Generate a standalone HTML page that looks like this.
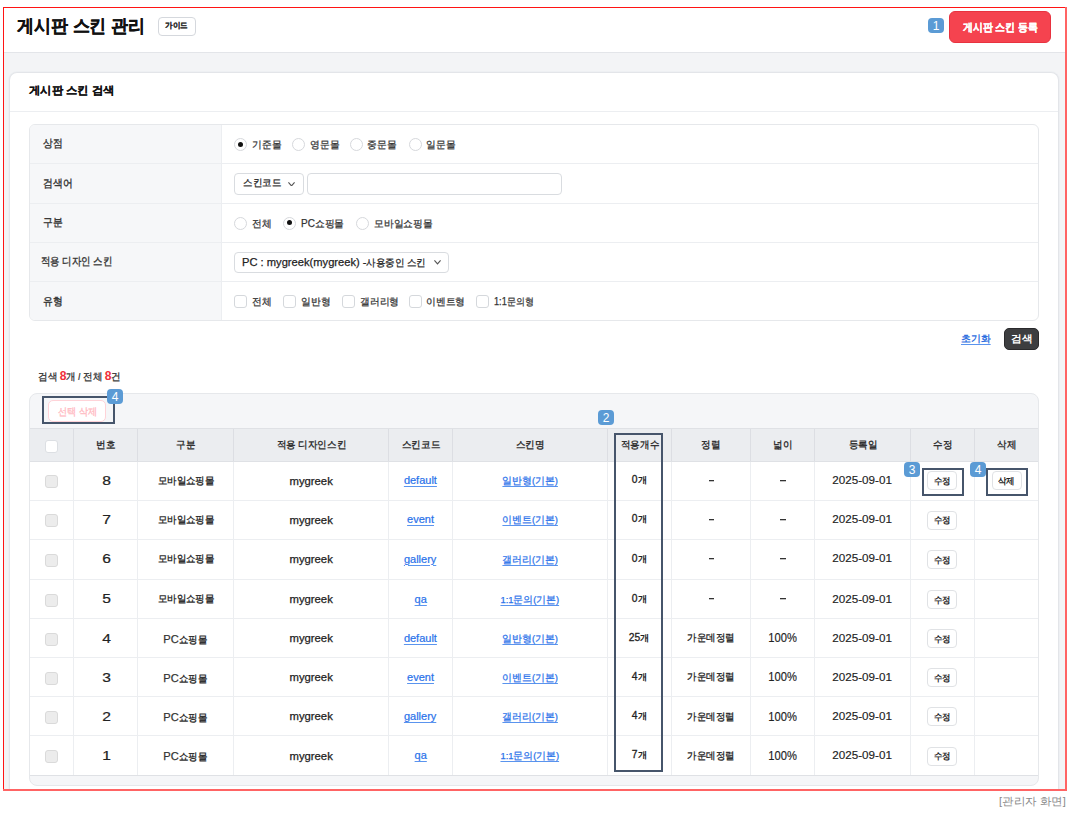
<!DOCTYPE html><html lang="ko"><head><meta charset="utf-8"><title>게시판 스킨 관리</title><style>
*{box-sizing:border-box;margin:0;padding:0}
html,body{width:1078px;height:817px;background:#fff;overflow:hidden}
body{font-family:"Liberation Sans",sans-serif;color:#222;position:relative}
.a{position:absolute;white-space:nowrap}
.badge{position:absolute;width:16px;height:15px;border-radius:4px;background:#5b9bd5;color:#fff;font-size:12px;line-height:17px;text-align:center;overflow:hidden}
.radio{position:absolute;width:13px;height:13px;border:1.5px solid #d6d8dc;border-radius:50%;background:#fff}
.radio.on::after{content:"";position:absolute;left:2.5px;top:2.5px;width:5px;height:5px;border-radius:50%;background:#111}
.cb{position:absolute;width:13px;height:13px;border:1.4px solid #d5d8dc;border-radius:3px;background:#fff}
.cbg{position:absolute;width:13px;height:13px;border:1.2px solid #dadada;border-radius:3px;background:#ececec}
.sel{position:absolute;height:22px;border:1.2px solid #d9dce0;border-radius:4px;background:#fff}
.hl{position:absolute;border:2px solid #46556b}
.box{position:absolute}
.u{text-decoration:underline;text-underline-offset:1.5px;text-decoration-thickness:1px;text-decoration-color:#5a94ee}
</style></head><body>
<div class="box" style="left:4px;top:8px;width:1061px;height:782px;background:#f3f4f6"></div>
<div class="box" style="left:4px;top:8px;width:1061px;height:44px;background:#fff"></div>
<div class="box" style="left:4px;top:52px;width:1061px;height:1px;background:#e3e5e9"></div>
<div class="a" style="left:17.10px;top:16.00px;font-size:17.5px;line-height:20px;font-weight:bold;color:#111;-webkit-text-stroke:0.3px #111;transform:scaleX(0.943);transform-origin:0 0;">게시판 스킨 관리</div>
<div class="box" style="left:158px;top:16.5px;width:38px;height:19px;border:1.5px solid #d5d8dd;border-radius:4px;background:#fff"></div>
<div class="a" style="left:164.90px;top:15.90px;font-size:8.0px;line-height:20px;font-weight:bold;color:#333;-webkit-text-stroke:0.2px #333;transform:scaleX(0.942);transform-origin:0 0;">가이드</div>
<div class="badge" style="left:928px;top:18px">1</div>
<div class="box" style="left:949px;top:11px;width:102px;height:32px;border-radius:6px;background:#f5434f;border:1px solid #e8323f"></div>
<div class="a" style="left:963.30px;top:16.70px;font-size:10.5px;line-height:20px;font-weight:bold;color:#fff;-webkit-text-stroke:0.25px #fff;transform:scaleX(0.899);transform-origin:0 0;">게시판 스킨 등록</div>
<div class="box" style="left:9px;top:72px;width:1050px;height:718px;background:#fff;border:1px solid #e3e5e9;border-bottom:none;border-radius:8px 8px 0 0;box-shadow:0 0 0 1px #eef0f3"></div>
<div class="a" style="left:29.00px;top:79.60px;font-size:11.25px;line-height:20px;font-weight:bold;color:#111;-webkit-text-stroke:0.15px #111;transform:scaleX(1.027);transform-origin:0 0;">게시판 스킨 검색</div>
<div class="box" style="left:10px;top:111px;width:1048px;height:1px;background:#eceef1"></div>
<div class="box" style="left:29px;top:124px;width:1010px;height:197px;border:1px solid #e6e8eb;border-radius:6px;background:#fff;overflow:hidden"><div class="box" style="left:0;top:0;width:191px;height:196px;background:#f6f7f9"></div><div class="box" style="left:191px;top:0;width:1px;height:196px;background:#eceef1"></div><div class="box" style="left:0;top:38px;width:1008px;height:1px;background:#eceef1"></div><div class="box" style="left:0;top:78px;width:1008px;height:1px;background:#eceef1"></div><div class="box" style="left:0;top:117px;width:1008px;height:1px;background:#eceef1"></div><div class="box" style="left:0;top:156px;width:1008px;height:1px;background:#eceef1"></div></div>
<div class="a" style="left:42.50px;top:133.30px;font-size:10.75px;line-height:20px;font-weight:normal;color:#333;-webkit-text-stroke:0.35px #333;transform:scaleX(0.891);transform-origin:0 0;">상점</div>
<div class="a" style="left:42.50px;top:172.60px;font-size:10.75px;line-height:20px;font-weight:normal;color:#333;-webkit-text-stroke:0.35px #333;transform:scaleX(0.891);transform-origin:0 0;">검색어</div>
<div class="a" style="left:42.50px;top:211.90px;font-size:10.75px;line-height:20px;font-weight:normal;color:#333;-webkit-text-stroke:0.35px #333;transform:scaleX(0.891);transform-origin:0 0;">구분</div>
<div class="a" style="left:42.50px;top:290.80px;font-size:10.75px;line-height:20px;font-weight:normal;color:#333;-webkit-text-stroke:0.35px #333;transform:scaleX(0.891);transform-origin:0 0;">유형</div>
<div class="a" style="left:41.40px;top:251.40px;font-size:11.0px;line-height:20px;font-weight:normal;color:#333;-webkit-text-stroke:0.35px #333;transform:scaleX(0.856);transform-origin:0 0;">적용 디자인 스킨</div>
<div class="radio on" style="left:234px;top:138px"></div>
<div class="a" style="left:251.80px;top:134.90px;font-size:10.25px;line-height:20px;font-weight:normal;color:#333;-webkit-text-stroke:0.25px #333;transform:scaleX(0.976);transform-origin:0 0;">기준몰</div>
<div class="radio" style="left:292px;top:138px"></div>
<div class="a" style="left:309.50px;top:134.90px;font-size:10.25px;line-height:20px;font-weight:normal;color:#333;-webkit-text-stroke:0.25px #333;transform:scaleX(0.976);transform-origin:0 0;">영문몰</div>
<div class="radio" style="left:350px;top:138px"></div>
<div class="a" style="left:367.00px;top:134.90px;font-size:10.25px;line-height:20px;font-weight:normal;color:#333;-webkit-text-stroke:0.25px #333;transform:scaleX(0.976);transform-origin:0 0;">중문몰</div>
<div class="radio" style="left:408.5px;top:138px"></div>
<div class="a" style="left:425.50px;top:134.90px;font-size:10.25px;line-height:20px;font-weight:normal;color:#333;-webkit-text-stroke:0.25px #333;transform:scaleX(0.976);transform-origin:0 0;">일문몰</div>
<div class="sel" style="left:234px;top:172.5px;width:69.5px"></div>
<div class="a" style="left:242.80px;top:172.80px;font-size:9.5px;line-height:20px;font-weight:normal;color:#222;-webkit-text-stroke:0.25px #222;transform:scaleX(0.952);transform-origin:0 0;">스킨코드</div>
<svg class="a" style="left:287.5px;top:181.5px" width="7" height="4.5" viewBox="0 0 7 4.5"><path d="M0.4 0.4 L3.5 3.8 L6.6 0.4" fill="none" stroke="#555" stroke-width="1.2"/></svg>
<div class="sel" style="left:307px;top:172.5px;width:255px"></div>
<div class="radio" style="left:234px;top:216.5px"></div>
<div class="a" style="left:251.80px;top:213.50px;font-size:10.25px;line-height:20px;font-weight:normal;color:#333;-webkit-text-stroke:0.25px #333;transform:scaleX(0.976);transform-origin:0 0;">전체</div>
<div class="radio on" style="left:283px;top:216.5px"></div>
<div class="a" style="left:300.50px;top:213.50px;font-size:10.25px;line-height:20px;font-weight:normal;color:#333;-webkit-text-stroke:0.25px #333;transform:scaleX(0.976);transform-origin:0 0;">PC쇼핑몰</div>
<div class="radio" style="left:356px;top:216.5px"></div>
<div class="a" style="left:373.50px;top:213.50px;font-size:10.25px;line-height:20px;font-weight:normal;color:#333;-webkit-text-stroke:0.25px #333;transform:scaleX(0.976);transform-origin:0 0;">모바일쇼핑몰</div>
<div class="sel" style="left:234px;top:251.5px;width:215px;height:21px"></div>
<div class="a" style="left:242.30px;top:251.90px;font-size:11.5px;line-height:20px;font-weight:normal;color:#222;-webkit-text-stroke:0.25px #222;transform:scaleX(0.97);transform-origin:0 0;">PC : mygreek(mygreek) -</div>
<div class="a" style="left:366.00px;top:252.60px;font-size:10.25px;line-height:20px;font-weight:normal;color:#222;-webkit-text-stroke:0.25px #222;transform:scaleX(0.954);transform-origin:0 0;">사용중인 스킨</div>
<svg class="a" style="left:434px;top:260px" width="7" height="4.5" viewBox="0 0 7 4.5"><path d="M0.4 0.4 L3.5 3.8 L6.6 0.4" fill="none" stroke="#555" stroke-width="1.2"/></svg>
<div class="cb" style="left:234px;top:295px"></div>
<div class="a" style="left:251.50px;top:292.40px;font-size:10.25px;line-height:20px;font-weight:normal;color:#333;-webkit-text-stroke:0.25px #333;transform:scaleX(0.976);transform-origin:0 0;">전체</div>
<div class="cb" style="left:283px;top:295px"></div>
<div class="a" style="left:300.50px;top:292.40px;font-size:10.25px;line-height:20px;font-weight:normal;color:#333;-webkit-text-stroke:0.25px #333;transform:scaleX(0.976);transform-origin:0 0;">일반형</div>
<div class="cb" style="left:342px;top:295px"></div>
<div class="a" style="left:359.50px;top:292.40px;font-size:10.25px;line-height:20px;font-weight:normal;color:#333;-webkit-text-stroke:0.25px #333;transform:scaleX(0.976);transform-origin:0 0;">갤러리형</div>
<div class="cb" style="left:408.5px;top:295px"></div>
<div class="a" style="left:426.00px;top:292.40px;font-size:10.25px;line-height:20px;font-weight:normal;color:#333;-webkit-text-stroke:0.25px #333;transform:scaleX(0.976);transform-origin:0 0;">이벤트형</div>
<div class="cb" style="left:476px;top:295px"></div>
<div class="a" style="left:493.50px;top:292.40px;font-size:10.25px;line-height:20px;font-weight:normal;color:#333;-webkit-text-stroke:0.25px #333;transform:scaleX(0.898);transform-origin:0 0;">1:1문의형</div>
<div class="a" style="left:961.30px;top:329.00px;font-size:9.75px;line-height:20px;font-weight:bold;color:#2f6fe0;transform:scaleX(0.988);transform-origin:0 0;"><span class="u">초기화</span></div>
<div class="box" style="left:1003.5px;top:328px;width:35.5px;height:22px;border-radius:5px;background:#3d3e40;border:1px solid #2a2a2c"></div>
<div class="a" style="left:1010.70px;top:328.60px;font-size:10.0px;line-height:20px;font-weight:bold;color:#fff;transform:scaleX(1.065);transform-origin:0 0;">검색</div>
<div class="a" style="left:37.80px;top:366.10px;font-size:9.75px;line-height:20px;font-weight:bold;color:#444;transform:scaleX(0.953);transform-origin:0 0;">검색 <span style="font-size:1.3em;letter-spacing:-0.5px;color:#f0303c">8</span>개 / 전체 <span style="font-size:1.3em;letter-spacing:-0.5px;color:#f0303c">8</span>건</div>
<div class="box" style="left:29px;top:393px;width:1010px;height:393px;border:1px solid #e6e8eb;border-radius:8px;background:#f5f6f8"></div>
<div class="box" style="left:48px;top:400px;width:58px;height:21.5px;border:1.2px solid #ffd3d8;border-radius:5px;background:#fff"></div>
<div class="a" style="left:58.10px;top:401.80px;font-size:10.0px;line-height:20px;font-weight:normal;color:#ffbcc4;-webkit-text-stroke:0.35px #ffbcc4;transform:scaleX(0.917);transform-origin:0 0;">선택 삭제</div>
<div class="hl" style="left:42px;top:396px;width:73px;height:28px"></div>
<div class="badge" style="left:107px;top:389px">4</div>
<div class="box" style="left:30px;top:428px;width:1008px;height:34px;background:#ebedf0;border-top:1px solid #dfe1e5;border-bottom:1px solid #dfe1e5"></div>
<div class="box" style="left:30px;top:462px;width:1008px;height:313px;background:#fff"></div>
<div class="box" style="left:30px;top:500.0px;width:1008px;height:1px;background:#eceef1"></div>
<div class="box" style="left:30px;top:539.0px;width:1008px;height:1px;background:#eceef1"></div>
<div class="box" style="left:30px;top:579.0px;width:1008px;height:1px;background:#eceef1"></div>
<div class="box" style="left:30px;top:618.0px;width:1008px;height:1px;background:#eceef1"></div>
<div class="box" style="left:30px;top:657.0px;width:1008px;height:1px;background:#eceef1"></div>
<div class="box" style="left:30px;top:696.0px;width:1008px;height:1px;background:#eceef1"></div>
<div class="box" style="left:30px;top:735.0px;width:1008px;height:1px;background:#eceef1"></div>
<div class="box" style="left:30px;top:775px;width:1008px;height:1px;background:#dfe1e5"></div>
<div class="box" style="left:73px;top:429px;width:1px;height:32px;background:#dcdee3"></div>
<div class="box" style="left:73px;top:462px;width:1px;height:313px;background:#eceef1"></div>
<div class="box" style="left:137px;top:429px;width:1px;height:32px;background:#dcdee3"></div>
<div class="box" style="left:137px;top:462px;width:1px;height:313px;background:#eceef1"></div>
<div class="box" style="left:233px;top:429px;width:1px;height:32px;background:#dcdee3"></div>
<div class="box" style="left:233px;top:462px;width:1px;height:313px;background:#eceef1"></div>
<div class="box" style="left:388px;top:429px;width:1px;height:32px;background:#dcdee3"></div>
<div class="box" style="left:388px;top:462px;width:1px;height:313px;background:#eceef1"></div>
<div class="box" style="left:452px;top:429px;width:1px;height:32px;background:#dcdee3"></div>
<div class="box" style="left:452px;top:462px;width:1px;height:313px;background:#eceef1"></div>
<div class="box" style="left:607px;top:429px;width:1px;height:32px;background:#dcdee3"></div>
<div class="box" style="left:607px;top:462px;width:1px;height:313px;background:#eceef1"></div>
<div class="box" style="left:671px;top:429px;width:1px;height:32px;background:#dcdee3"></div>
<div class="box" style="left:671px;top:462px;width:1px;height:313px;background:#eceef1"></div>
<div class="box" style="left:750px;top:429px;width:1px;height:32px;background:#dcdee3"></div>
<div class="box" style="left:750px;top:462px;width:1px;height:313px;background:#eceef1"></div>
<div class="box" style="left:814px;top:429px;width:1px;height:32px;background:#dcdee3"></div>
<div class="box" style="left:814px;top:462px;width:1px;height:313px;background:#eceef1"></div>
<div class="box" style="left:910px;top:429px;width:1px;height:32px;background:#dcdee3"></div>
<div class="box" style="left:910px;top:462px;width:1px;height:313px;background:#eceef1"></div>
<div class="box" style="left:974px;top:429px;width:1px;height:32px;background:#dcdee3"></div>
<div class="box" style="left:974px;top:462px;width:1px;height:313px;background:#eceef1"></div>
<div class="cb" style="left:45px;top:440px;border-color:#dcdfe3"></div>
<div class="a" style="left:74px;top:435.30px;width:63px;text-align:center;font-size:10.0px;line-height:20px;font-weight:bold;color:#333;"><span style="display:inline-block;transform:scaleX(0.954);">번호</span></div>
<div class="a" style="left:138px;top:435.30px;width:95px;text-align:center;font-size:10.0px;line-height:20px;font-weight:bold;color:#333;"><span style="display:inline-block;transform:scaleX(0.954);">구분</span></div>
<div class="a" style="left:234px;top:435.30px;width:154px;text-align:center;font-size:10.0px;line-height:20px;font-weight:bold;color:#333;"><span style="display:inline-block;transform:scaleX(0.954);">적용 디자인스킨</span></div>
<div class="a" style="left:389px;top:435.30px;width:63px;text-align:center;font-size:10.0px;line-height:20px;font-weight:bold;color:#333;"><span style="display:inline-block;transform:scaleX(0.954);">스킨코드</span></div>
<div class="a" style="left:453px;top:435.30px;width:154px;text-align:center;font-size:10.0px;line-height:20px;font-weight:bold;color:#333;"><span style="display:inline-block;transform:scaleX(0.954);">스킨명</span></div>
<div class="a" style="left:608px;top:435.30px;width:63px;text-align:center;font-size:10.0px;line-height:20px;font-weight:bold;color:#333;"><span style="display:inline-block;transform:scaleX(0.954);">적용개수</span></div>
<div class="a" style="left:672px;top:435.30px;width:78px;text-align:center;font-size:10.0px;line-height:20px;font-weight:bold;color:#333;"><span style="display:inline-block;transform:scaleX(0.954);">정렬</span></div>
<div class="a" style="left:751px;top:435.30px;width:63px;text-align:center;font-size:10.0px;line-height:20px;font-weight:bold;color:#333;"><span style="display:inline-block;transform:scaleX(0.954);">넓이</span></div>
<div class="a" style="left:815px;top:435.30px;width:95px;text-align:center;font-size:10.0px;line-height:20px;font-weight:bold;color:#333;"><span style="display:inline-block;transform:scaleX(0.954);">등록일</span></div>
<div class="a" style="left:911px;top:435.30px;width:63px;text-align:center;font-size:10.0px;line-height:20px;font-weight:bold;color:#333;"><span style="display:inline-block;transform:scaleX(0.954);">수정</span></div>
<div class="a" style="left:975px;top:435.30px;width:63px;text-align:center;font-size:10.0px;line-height:20px;font-weight:bold;color:#333;"><span style="display:inline-block;transform:scaleX(0.954);">삭제</span></div>
<div class="cbg" style="left:45px;top:475.3px"></div>
<div class="a" style="left:75px;top:470.90px;width:63px;text-align:center;font-size:12.5px;line-height:20px;font-weight:normal;color:#222;-webkit-text-stroke:0.2px #222;"><span style="display:inline-block;transform:scaleX(1.247);">8</span></div>
<div class="a" style="left:138px;top:470.90px;width:95px;text-align:center;font-size:10.25px;line-height:20px;font-weight:bold;color:#333;"><span style="display:inline-block;transform:scaleX(0.944);">모바일쇼핑몰</span></div>
<div class="a" style="left:234px;top:470.50px;width:154px;text-align:center;font-size:10.5px;line-height:20px;font-weight:normal;color:#222;-webkit-text-stroke:0.25px #222;"><span style="display:inline-block;transform:scaleX(1.075);">mygreek</span></div>
<div class="a" style="left:389px;top:471.30px;width:63px;text-align:center;font-size:10.25px;line-height:20px;font-weight:normal;color:#2a72ea;-webkit-text-stroke:0.2px #2a72ea;"><span style="display:inline-block;transform:scaleX(1.072);"><span class="u">default</span></span></div>
<div class="a" style="left:453px;top:471.30px;width:154px;text-align:center;font-size:9.5px;line-height:20px;font-weight:normal;color:#2a72ea;-webkit-text-stroke:0.25px #2a72ea;"><span style="display:inline-block;transform:scaleX(0.985);"><span class="u">일반형(기본)</span></span></div>
<div class="a" style="left:608px;top:470.30px;width:63px;text-align:center;font-size:9.0px;line-height:20px;font-weight:bold;color:#222;"><span style="display:inline-block;transform:scaleX(1.02);"><span style="font-weight:normal;font-size:1.12em;-webkit-text-stroke:0.3px currentColor">0</span>개</span></div>
<div class="box" style="left:708.8px;top:480px;width:5.4px;height:1px;background:#333;box-shadow:0 0.6px 0 #9a9a9a"></div>
<div class="box" style="left:780.3px;top:480px;width:5.4px;height:1px;background:#333;box-shadow:0 0.6px 0 #9a9a9a"></div>
<div class="a" style="left:815px;top:470.10px;width:95px;text-align:center;font-size:11.75px;line-height:20px;font-weight:normal;color:#222;-webkit-text-stroke:0.15px #222;"><span style="display:inline-block;transform:scaleX(0.993);">2025-09-01</span></div>
<div class="box" style="left:927px;top:471.4px;width:29.7px;height:19px;border:1px solid #e0e2e5;border-radius:4px;background:#fff"></div>
<div class="a" style="left:934.10px;top:471.20px;font-size:8.75px;line-height:20px;font-weight:bold;color:#222;transform:scaleX(0.94);transform-origin:0 0;">수정</div>
<div class="box" style="left:992px;top:471.4px;width:29.5px;height:19px;border:1px solid #e0e2e5;border-radius:4px;background:#fff"></div>
<div class="a" style="left:998.10px;top:471.20px;font-size:8.75px;line-height:20px;font-weight:bold;color:#222;transform:scaleX(0.94);transform-origin:0 0;">삭제</div>
<div class="cbg" style="left:45px;top:514.4px"></div>
<div class="a" style="left:75px;top:510.05px;width:63px;text-align:center;font-size:12.5px;line-height:20px;font-weight:normal;color:#222;-webkit-text-stroke:0.2px #222;"><span style="display:inline-block;transform:scaleX(1.247);">7</span></div>
<div class="a" style="left:138px;top:510.05px;width:95px;text-align:center;font-size:10.25px;line-height:20px;font-weight:bold;color:#333;"><span style="display:inline-block;transform:scaleX(0.944);">모바일쇼핑몰</span></div>
<div class="a" style="left:234px;top:509.65px;width:154px;text-align:center;font-size:10.5px;line-height:20px;font-weight:normal;color:#222;-webkit-text-stroke:0.25px #222;"><span style="display:inline-block;transform:scaleX(1.075);">mygreek</span></div>
<div class="a" style="left:389px;top:510.45px;width:63px;text-align:center;font-size:10.25px;line-height:20px;font-weight:normal;color:#2a72ea;-webkit-text-stroke:0.2px #2a72ea;"><span style="display:inline-block;transform:scaleX(1.072);"><span class="u">event</span></span></div>
<div class="a" style="left:453px;top:510.45px;width:154px;text-align:center;font-size:9.5px;line-height:20px;font-weight:normal;color:#2a72ea;-webkit-text-stroke:0.25px #2a72ea;"><span style="display:inline-block;transform:scaleX(0.985);"><span class="u">이벤트(기본)</span></span></div>
<div class="a" style="left:608px;top:509.45px;width:63px;text-align:center;font-size:9.0px;line-height:20px;font-weight:bold;color:#222;"><span style="display:inline-block;transform:scaleX(1.02);"><span style="font-weight:normal;font-size:1.12em;-webkit-text-stroke:0.3px currentColor">0</span>개</span></div>
<div class="box" style="left:708.8px;top:519px;width:5.4px;height:1px;background:#333;box-shadow:0 0.6px 0 #9a9a9a"></div>
<div class="box" style="left:780.3px;top:519px;width:5.4px;height:1px;background:#333;box-shadow:0 0.6px 0 #9a9a9a"></div>
<div class="a" style="left:815px;top:509.25px;width:95px;text-align:center;font-size:11.75px;line-height:20px;font-weight:normal;color:#222;-webkit-text-stroke:0.15px #222;"><span style="display:inline-block;transform:scaleX(0.993);">2025-09-01</span></div>
<div class="box" style="left:927px;top:510.5px;width:29.7px;height:19px;border:1px solid #e0e2e5;border-radius:4px;background:#fff"></div>
<div class="a" style="left:934.10px;top:510.35px;font-size:8.75px;line-height:20px;font-weight:bold;color:#222;transform:scaleX(0.94);transform-origin:0 0;">수정</div>
<div class="cbg" style="left:45px;top:553.6px"></div>
<div class="a" style="left:75px;top:549.20px;width:63px;text-align:center;font-size:12.5px;line-height:20px;font-weight:normal;color:#222;-webkit-text-stroke:0.2px #222;"><span style="display:inline-block;transform:scaleX(1.247);">6</span></div>
<div class="a" style="left:138px;top:549.20px;width:95px;text-align:center;font-size:10.25px;line-height:20px;font-weight:bold;color:#333;"><span style="display:inline-block;transform:scaleX(0.944);">모바일쇼핑몰</span></div>
<div class="a" style="left:234px;top:548.80px;width:154px;text-align:center;font-size:10.5px;line-height:20px;font-weight:normal;color:#222;-webkit-text-stroke:0.25px #222;"><span style="display:inline-block;transform:scaleX(1.075);">mygreek</span></div>
<div class="a" style="left:389px;top:549.60px;width:63px;text-align:center;font-size:10.25px;line-height:20px;font-weight:normal;color:#2a72ea;-webkit-text-stroke:0.2px #2a72ea;"><span style="display:inline-block;transform:scaleX(1.072);"><span class="u">gallery</span></span></div>
<div class="a" style="left:453px;top:549.60px;width:154px;text-align:center;font-size:9.5px;line-height:20px;font-weight:normal;color:#2a72ea;-webkit-text-stroke:0.25px #2a72ea;"><span style="display:inline-block;transform:scaleX(0.985);"><span class="u">갤러리(기본)</span></span></div>
<div class="a" style="left:608px;top:548.60px;width:63px;text-align:center;font-size:9.0px;line-height:20px;font-weight:bold;color:#222;"><span style="display:inline-block;transform:scaleX(1.02);"><span style="font-weight:normal;font-size:1.12em;-webkit-text-stroke:0.3px currentColor">0</span>개</span></div>
<div class="box" style="left:708.8px;top:558px;width:5.4px;height:1px;background:#333;box-shadow:0 0.6px 0 #9a9a9a"></div>
<div class="box" style="left:780.3px;top:558px;width:5.4px;height:1px;background:#333;box-shadow:0 0.6px 0 #9a9a9a"></div>
<div class="a" style="left:815px;top:548.40px;width:95px;text-align:center;font-size:11.75px;line-height:20px;font-weight:normal;color:#222;-webkit-text-stroke:0.15px #222;"><span style="display:inline-block;transform:scaleX(0.993);">2025-09-01</span></div>
<div class="box" style="left:927px;top:549.7px;width:29.7px;height:19px;border:1px solid #e0e2e5;border-radius:4px;background:#fff"></div>
<div class="a" style="left:934.10px;top:549.50px;font-size:8.75px;line-height:20px;font-weight:bold;color:#222;transform:scaleX(0.94);transform-origin:0 0;">수정</div>
<div class="cbg" style="left:45px;top:593.8px"></div>
<div class="a" style="left:75px;top:589.35px;width:63px;text-align:center;font-size:12.5px;line-height:20px;font-weight:normal;color:#222;-webkit-text-stroke:0.2px #222;"><span style="display:inline-block;transform:scaleX(1.247);">5</span></div>
<div class="a" style="left:138px;top:589.35px;width:95px;text-align:center;font-size:10.25px;line-height:20px;font-weight:bold;color:#333;"><span style="display:inline-block;transform:scaleX(0.944);">모바일쇼핑몰</span></div>
<div class="a" style="left:234px;top:588.95px;width:154px;text-align:center;font-size:10.5px;line-height:20px;font-weight:normal;color:#222;-webkit-text-stroke:0.25px #222;"><span style="display:inline-block;transform:scaleX(1.075);">mygreek</span></div>
<div class="a" style="left:389px;top:589.75px;width:63px;text-align:center;font-size:10.25px;line-height:20px;font-weight:normal;color:#2a72ea;-webkit-text-stroke:0.2px #2a72ea;"><span style="display:inline-block;transform:scaleX(1.072);"><span class="u">qa</span></span></div>
<div class="a" style="left:453px;top:589.75px;width:154px;text-align:center;font-size:9.5px;line-height:20px;font-weight:normal;color:#2a72ea;-webkit-text-stroke:0.25px #2a72ea;"><span style="display:inline-block;transform:scaleX(0.985);"><span class="u">1:1문의(기본)</span></span></div>
<div class="a" style="left:608px;top:588.75px;width:63px;text-align:center;font-size:9.0px;line-height:20px;font-weight:bold;color:#222;"><span style="display:inline-block;transform:scaleX(1.02);"><span style="font-weight:normal;font-size:1.12em;-webkit-text-stroke:0.3px currentColor">0</span>개</span></div>
<div class="box" style="left:708.8px;top:598px;width:5.4px;height:1px;background:#333;box-shadow:0 0.6px 0 #9a9a9a"></div>
<div class="box" style="left:780.3px;top:598px;width:5.4px;height:1px;background:#333;box-shadow:0 0.6px 0 #9a9a9a"></div>
<div class="a" style="left:815px;top:588.55px;width:95px;text-align:center;font-size:11.75px;line-height:20px;font-weight:normal;color:#222;-webkit-text-stroke:0.15px #222;"><span style="display:inline-block;transform:scaleX(0.993);">2025-09-01</span></div>
<div class="box" style="left:927px;top:589.9px;width:29.7px;height:19px;border:1px solid #e0e2e5;border-radius:4px;background:#fff"></div>
<div class="a" style="left:934.10px;top:589.65px;font-size:8.75px;line-height:20px;font-weight:bold;color:#222;transform:scaleX(0.94);transform-origin:0 0;">수정</div>
<div class="cbg" style="left:45px;top:632.9px"></div>
<div class="a" style="left:75px;top:628.50px;width:63px;text-align:center;font-size:12.5px;line-height:20px;font-weight:normal;color:#222;-webkit-text-stroke:0.2px #222;"><span style="display:inline-block;transform:scaleX(1.247);">4</span></div>
<div class="a" style="left:138px;top:628.50px;width:95px;text-align:center;font-size:10.25px;line-height:20px;font-weight:bold;color:#333;"><span style="display:inline-block;transform:scaleX(0.944);"><span style="font-weight:normal;font-size:1.15em;-webkit-text-stroke:0.25px #333">PC</span>쇼핑몰</span></div>
<div class="a" style="left:234px;top:628.10px;width:154px;text-align:center;font-size:10.5px;line-height:20px;font-weight:normal;color:#222;-webkit-text-stroke:0.25px #222;"><span style="display:inline-block;transform:scaleX(1.075);">mygreek</span></div>
<div class="a" style="left:389px;top:628.90px;width:63px;text-align:center;font-size:10.25px;line-height:20px;font-weight:normal;color:#2a72ea;-webkit-text-stroke:0.2px #2a72ea;"><span style="display:inline-block;transform:scaleX(1.072);"><span class="u">default</span></span></div>
<div class="a" style="left:453px;top:628.90px;width:154px;text-align:center;font-size:9.5px;line-height:20px;font-weight:normal;color:#2a72ea;-webkit-text-stroke:0.25px #2a72ea;"><span style="display:inline-block;transform:scaleX(0.985);"><span class="u">일반형(기본)</span></span></div>
<div class="a" style="left:608px;top:627.90px;width:63px;text-align:center;font-size:9.0px;line-height:20px;font-weight:bold;color:#222;"><span style="display:inline-block;transform:scaleX(1.02);"><span style="font-weight:normal;font-size:1.12em;-webkit-text-stroke:0.3px currentColor">25</span>개</span></div>
<div class="a" style="left:672px;top:628.20px;width:78px;text-align:center;font-size:9.75px;line-height:20px;font-weight:bold;color:#333;"><span style="display:inline-block;transform:scaleX(0.944);">가운데정렬</span></div>
<div class="a" style="left:751px;top:628.20px;width:63px;text-align:center;font-size:12.25px;line-height:20px;font-weight:normal;color:#222;-webkit-text-stroke:0.15px #222;"><span style="display:inline-block;transform:scaleX(0.913);">100%</span></div>
<div class="a" style="left:815px;top:627.70px;width:95px;text-align:center;font-size:11.75px;line-height:20px;font-weight:normal;color:#222;-webkit-text-stroke:0.15px #222;"><span style="display:inline-block;transform:scaleX(0.993);">2025-09-01</span></div>
<div class="box" style="left:927px;top:629.0px;width:29.7px;height:19px;border:1px solid #e0e2e5;border-radius:4px;background:#fff"></div>
<div class="a" style="left:934.10px;top:628.80px;font-size:8.75px;line-height:20px;font-weight:bold;color:#222;transform:scaleX(0.94);transform-origin:0 0;">수정</div>
<div class="cbg" style="left:45px;top:672.0px"></div>
<div class="a" style="left:75px;top:667.65px;width:63px;text-align:center;font-size:12.5px;line-height:20px;font-weight:normal;color:#222;-webkit-text-stroke:0.2px #222;"><span style="display:inline-block;transform:scaleX(1.247);">3</span></div>
<div class="a" style="left:138px;top:667.65px;width:95px;text-align:center;font-size:10.25px;line-height:20px;font-weight:bold;color:#333;"><span style="display:inline-block;transform:scaleX(0.944);"><span style="font-weight:normal;font-size:1.15em;-webkit-text-stroke:0.25px #333">PC</span>쇼핑몰</span></div>
<div class="a" style="left:234px;top:667.25px;width:154px;text-align:center;font-size:10.5px;line-height:20px;font-weight:normal;color:#222;-webkit-text-stroke:0.25px #222;"><span style="display:inline-block;transform:scaleX(1.075);">mygreek</span></div>
<div class="a" style="left:389px;top:668.05px;width:63px;text-align:center;font-size:10.25px;line-height:20px;font-weight:normal;color:#2a72ea;-webkit-text-stroke:0.2px #2a72ea;"><span style="display:inline-block;transform:scaleX(1.072);"><span class="u">event</span></span></div>
<div class="a" style="left:453px;top:668.05px;width:154px;text-align:center;font-size:9.5px;line-height:20px;font-weight:normal;color:#2a72ea;-webkit-text-stroke:0.25px #2a72ea;"><span style="display:inline-block;transform:scaleX(0.985);"><span class="u">이벤트(기본)</span></span></div>
<div class="a" style="left:608px;top:667.05px;width:63px;text-align:center;font-size:9.0px;line-height:20px;font-weight:bold;color:#222;"><span style="display:inline-block;transform:scaleX(1.02);"><span style="font-weight:normal;font-size:1.12em;-webkit-text-stroke:0.3px currentColor">4</span>개</span></div>
<div class="a" style="left:672px;top:667.35px;width:78px;text-align:center;font-size:9.75px;line-height:20px;font-weight:bold;color:#333;"><span style="display:inline-block;transform:scaleX(0.944);">가운데정렬</span></div>
<div class="a" style="left:751px;top:667.35px;width:63px;text-align:center;font-size:12.25px;line-height:20px;font-weight:normal;color:#222;-webkit-text-stroke:0.15px #222;"><span style="display:inline-block;transform:scaleX(0.913);">100%</span></div>
<div class="a" style="left:815px;top:666.85px;width:95px;text-align:center;font-size:11.75px;line-height:20px;font-weight:normal;color:#222;-webkit-text-stroke:0.15px #222;"><span style="display:inline-block;transform:scaleX(0.993);">2025-09-01</span></div>
<div class="box" style="left:927px;top:668.1px;width:29.7px;height:19px;border:1px solid #e0e2e5;border-radius:4px;background:#fff"></div>
<div class="a" style="left:934.10px;top:667.95px;font-size:8.75px;line-height:20px;font-weight:bold;color:#222;transform:scaleX(0.94);transform-origin:0 0;">수정</div>
<div class="cbg" style="left:45px;top:711.2px"></div>
<div class="a" style="left:75px;top:706.80px;width:63px;text-align:center;font-size:12.5px;line-height:20px;font-weight:normal;color:#222;-webkit-text-stroke:0.2px #222;"><span style="display:inline-block;transform:scaleX(1.247);">2</span></div>
<div class="a" style="left:138px;top:706.80px;width:95px;text-align:center;font-size:10.25px;line-height:20px;font-weight:bold;color:#333;"><span style="display:inline-block;transform:scaleX(0.944);"><span style="font-weight:normal;font-size:1.15em;-webkit-text-stroke:0.25px #333">PC</span>쇼핑몰</span></div>
<div class="a" style="left:234px;top:706.40px;width:154px;text-align:center;font-size:10.5px;line-height:20px;font-weight:normal;color:#222;-webkit-text-stroke:0.25px #222;"><span style="display:inline-block;transform:scaleX(1.075);">mygreek</span></div>
<div class="a" style="left:389px;top:707.20px;width:63px;text-align:center;font-size:10.25px;line-height:20px;font-weight:normal;color:#2a72ea;-webkit-text-stroke:0.2px #2a72ea;"><span style="display:inline-block;transform:scaleX(1.072);"><span class="u">gallery</span></span></div>
<div class="a" style="left:453px;top:707.20px;width:154px;text-align:center;font-size:9.5px;line-height:20px;font-weight:normal;color:#2a72ea;-webkit-text-stroke:0.25px #2a72ea;"><span style="display:inline-block;transform:scaleX(0.985);"><span class="u">갤러리(기본)</span></span></div>
<div class="a" style="left:608px;top:706.20px;width:63px;text-align:center;font-size:9.0px;line-height:20px;font-weight:bold;color:#222;"><span style="display:inline-block;transform:scaleX(1.02);"><span style="font-weight:normal;font-size:1.12em;-webkit-text-stroke:0.3px currentColor">4</span>개</span></div>
<div class="a" style="left:672px;top:706.50px;width:78px;text-align:center;font-size:9.75px;line-height:20px;font-weight:bold;color:#333;"><span style="display:inline-block;transform:scaleX(0.944);">가운데정렬</span></div>
<div class="a" style="left:751px;top:706.50px;width:63px;text-align:center;font-size:12.25px;line-height:20px;font-weight:normal;color:#222;-webkit-text-stroke:0.15px #222;"><span style="display:inline-block;transform:scaleX(0.913);">100%</span></div>
<div class="a" style="left:815px;top:706.00px;width:95px;text-align:center;font-size:11.75px;line-height:20px;font-weight:normal;color:#222;-webkit-text-stroke:0.15px #222;"><span style="display:inline-block;transform:scaleX(0.993);">2025-09-01</span></div>
<div class="box" style="left:927px;top:707.3px;width:29.7px;height:19px;border:1px solid #e0e2e5;border-radius:4px;background:#fff"></div>
<div class="a" style="left:934.10px;top:707.10px;font-size:8.75px;line-height:20px;font-weight:bold;color:#222;transform:scaleX(0.94);transform-origin:0 0;">수정</div>
<div class="cbg" style="left:45px;top:750.3px"></div>
<div class="a" style="left:75px;top:745.95px;width:63px;text-align:center;font-size:12.5px;line-height:20px;font-weight:normal;color:#222;-webkit-text-stroke:0.2px #222;"><span style="display:inline-block;transform:scaleX(1.247);">1</span></div>
<div class="a" style="left:138px;top:745.95px;width:95px;text-align:center;font-size:10.25px;line-height:20px;font-weight:bold;color:#333;"><span style="display:inline-block;transform:scaleX(0.944);"><span style="font-weight:normal;font-size:1.15em;-webkit-text-stroke:0.25px #333">PC</span>쇼핑몰</span></div>
<div class="a" style="left:234px;top:745.55px;width:154px;text-align:center;font-size:10.5px;line-height:20px;font-weight:normal;color:#222;-webkit-text-stroke:0.25px #222;"><span style="display:inline-block;transform:scaleX(1.075);">mygreek</span></div>
<div class="a" style="left:389px;top:746.35px;width:63px;text-align:center;font-size:10.25px;line-height:20px;font-weight:normal;color:#2a72ea;-webkit-text-stroke:0.2px #2a72ea;"><span style="display:inline-block;transform:scaleX(1.072);"><span class="u">qa</span></span></div>
<div class="a" style="left:453px;top:746.35px;width:154px;text-align:center;font-size:9.5px;line-height:20px;font-weight:normal;color:#2a72ea;-webkit-text-stroke:0.25px #2a72ea;"><span style="display:inline-block;transform:scaleX(0.985);"><span class="u">1:1문의(기본)</span></span></div>
<div class="a" style="left:608px;top:745.35px;width:63px;text-align:center;font-size:9.0px;line-height:20px;font-weight:bold;color:#222;"><span style="display:inline-block;transform:scaleX(1.02);"><span style="font-weight:normal;font-size:1.12em;-webkit-text-stroke:0.3px currentColor">7</span>개</span></div>
<div class="a" style="left:672px;top:745.65px;width:78px;text-align:center;font-size:9.75px;line-height:20px;font-weight:bold;color:#333;"><span style="display:inline-block;transform:scaleX(0.944);">가운데정렬</span></div>
<div class="a" style="left:751px;top:745.65px;width:63px;text-align:center;font-size:12.25px;line-height:20px;font-weight:normal;color:#222;-webkit-text-stroke:0.15px #222;"><span style="display:inline-block;transform:scaleX(0.913);">100%</span></div>
<div class="a" style="left:815px;top:745.15px;width:95px;text-align:center;font-size:11.75px;line-height:20px;font-weight:normal;color:#222;-webkit-text-stroke:0.15px #222;"><span style="display:inline-block;transform:scaleX(0.993);">2025-09-01</span></div>
<div class="box" style="left:927px;top:746.5px;width:29.7px;height:19px;border:1px solid #e0e2e5;border-radius:4px;background:#fff"></div>
<div class="a" style="left:934.10px;top:746.25px;font-size:8.75px;line-height:20px;font-weight:bold;color:#222;transform:scaleX(0.94);transform-origin:0 0;">수정</div>
<div class="hl" style="left:614px;top:432.5px;width:49px;height:339.5px"></div>
<div class="badge" style="left:598px;top:410px">2</div>
<div class="hl" style="left:922px;top:467.5px;width:42px;height:28px"></div>
<div class="badge" style="left:904px;top:462px">3</div>
<div class="hl" style="left:986px;top:467.5px;width:42px;height:28px"></div>
<div class="badge" style="left:970px;top:462px">4</div>
<div class="box" style="left:3px;top:7px;width:1063px;height:1px;background:#ff1414"></div>
<div class="box" style="left:3px;top:7px;width:1px;height:783px;background:#ff1414"></div>
<div class="box" style="left:1065px;top:7px;width:2px;height:784px;background:#ff6464"></div>
<div class="box" style="left:3px;top:789px;width:1064px;height:2px;background:#ff6464"></div>
<div class="a" style="left:998.80px;top:790.50px;font-size:10.5px;line-height:20px;font-weight:normal;color:#888;transform:scaleX(1.048);transform-origin:0 0;">[관리자 화면]</div>
</body></html>
